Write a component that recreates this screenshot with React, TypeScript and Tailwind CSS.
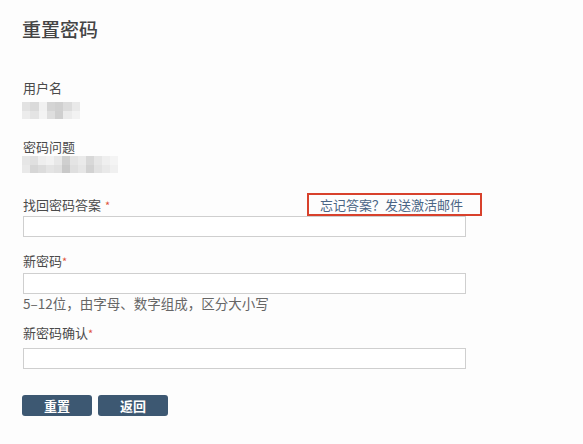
import React from "react";

const mosaicA = [
  ["#e2e2e2", "#dadada", "#f1f1f1", "#d4d4d4", "#d0d0d0", "#dcdcdc", "#e9e9e9"],
  ["#ececec", "#e4e4e4", "#f3f3f3", "#dedede", "#cfcfcf", "#ebebeb", "#f2f2f2"],
];

const mosaicB = [
  ["#e6e6e6", "#e0e0e0", "#eeeeee", "#f2f2f2", "#e8e8e8", "#cfcfcf", "#e4e4e4", "#eaeaea", "#d8d8d8", "#e6e6e6", "#efefef", "#f4f4f4"],
  ["#e9e9e9", "#d6d6d6", "#dcdcdc", "#e4e4e4", "#e0e0e0", "#c9c9c9", "#dfdfdf", "#e6e6e6", "#d2d2d2", "#e2e2e2", "#e9e9e9", "#f0f0f0"],
];

function Mosaic({ rows, cell }: { rows: string[][]; cell: string }) {
  return (
    <div className="flex flex-col">
      {rows.map((row, i) => (
        <div key={i} className="flex">
          {row.map((c, j) => (
            <div key={j} className={cell} style={{ backgroundColor: c }} />
          ))}
        </div>
      ))}
    </div>
  );
}

function Label({ text, star, spaced }: { text: string; star?: boolean; spaced?: boolean }) {
  return (
    <div className="text-[13px] leading-[18px] text-[#4a4a4a]">
      {text}
      {star && <span className={`text-[#e0533c] text-[11px] ${spaced ? "ml-[4px]" : ""}`}>*</span>}
    </div>
  );
}

export default function App() {
  return (
    <div
      className="w-[583px] h-[444px] bg-[#fdfdfd] pl-[22px] pt-[16px] flex flex-col items-start"
      style={{ fontFamily: '"Noto Sans CJK SC", "Noto Sans", sans-serif' }}
    >
      <h1 className="text-[19px] leading-[26px] text-[#444] font-medium">重置密码</h1>

      <div className="mt-[37px] ml-[1px]">
        <Label text="用户名" />
      </div>
      <div className="mt-[5px]">
        <Mosaic rows={mosaicA} cell="w-[8.3px] h-[8.5px]" />
      </div>

      <div className="mt-[19px] ml-[1px]">
        <Label text="密码问题" />
      </div>
      <div className="mt-[0px]">
        <Mosaic rows={mosaicB} cell="w-[8px] h-[8.5px]" />
      </div>

      <div className="mt-[20px] w-[460px] h-[23px] flex items-center">
        <div className="ml-[1px]">
          <Label text="找回密码答案" star spaced />
        </div>
        <div className="ml-auto h-[23px] border-2 border-[#d8412c] pl-[11px] pr-[17px] flex items-center">
          <span className="text-[13px] leading-[18px] text-[#4a6585]">忘记答案？发送激活邮件</span>
        </div>
      </div>
      <input className="ml-[1px] w-[443px] h-[21px] border border-[#cfcfcf] bg-white outline-none" />

      <div className="mt-[15px] ml-[1px]">
        <Label text="新密码" star />
      </div>
      <input className="mt-[3px] ml-[1px] w-[443px] h-[21px] border border-[#cfcfcf] bg-white outline-none" />
      <div className="ml-[1px] text-[13.5px] leading-[18px] text-[#666]">5–12位，由字母、数字组成，区分大小写</div>

      <div className="mt-[12px] ml-[1px]">
        <Label text="新密码确认" star />
      </div>
      <input className="mt-[6px] ml-[1px] w-[443px] h-[21px] border border-[#cfcfcf] bg-white outline-none" />

      <div className="mt-[26px] flex gap-[6px]">
        <button className="w-[70px] h-[21px] rounded-[3px] bg-[#3d5872] text-white text-[13px] font-bold leading-none">
          重置
        </button>
        <button className="w-[70px] h-[21px] rounded-[3px] bg-[#3d5872] text-white text-[13px] font-bold leading-none">
          返回
        </button>
      </div>
    </div>
  );
}
